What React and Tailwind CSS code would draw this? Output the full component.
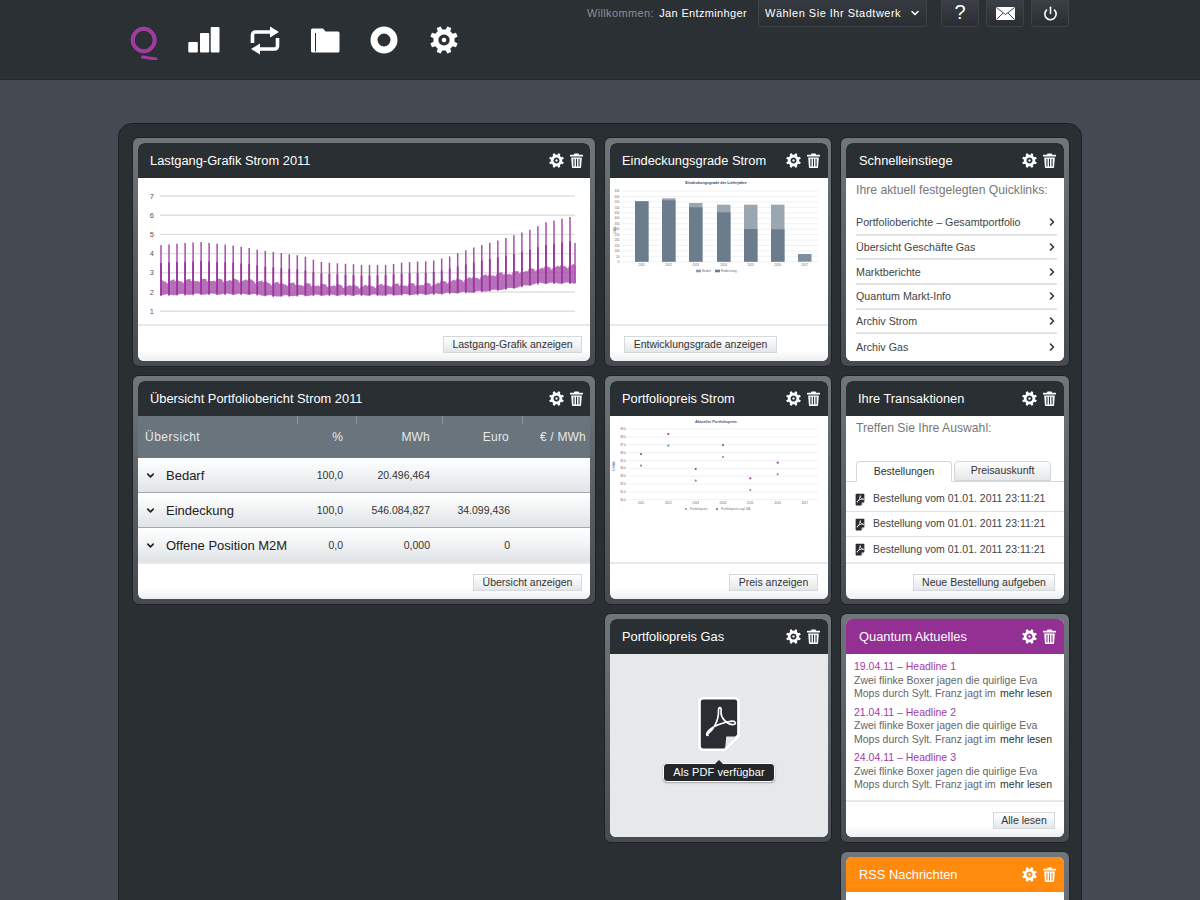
import { ChevronDown, ChevronRight, Power } from 'lucide-react';

const FONT = "font-['Liberation_Sans',Arial,sans-serif]";

// cog outline with a hole, used both in the nav and the card headers
const cogPath = (teeth, outer, inner) => {
    const pts = [];
    const step = (Math.PI * 2) / teeth;
    for (let i = 0; i < teeth; i++) {
        const a = i * step - Math.PI / 8;
        const w = step * 0.2;
        const p = (ang, r) => `${(16 + Math.cos(ang) * r).toFixed(2)} ${(16 + Math.sin(ang) * r).toFixed(2)}`;
        pts.push(`${i === 0 ? 'M' : 'L'}${p(a - w * 1.5, inner)}`, `L${p(a - w * 0.95, outer)}`, `L${p(a + w * 0.95, outer)}`, `L${p(a + w * 1.5, inner)}`);
    }
    return pts.join(' ') + ' Z';
};

const Cog = ({ className }) => (
    <svg viewBox="0 0 32 32" className={className}>
        <path
            fillRule="evenodd"
            fill="#fff"
            d={`${cogPath(8, 16, 12.2)} M16 9.6 a6.4 6.4 0 1 0 0.01 0 Z M16 13.4 a2.6 2.6 0 1 1 -0.01 0 Z`}
        />
    </svg>
);

const Trash = () => (
    <svg viewBox="0 0 13 15" className="w-[13px] h-[15px]">
        <path fill="#fff" d="M4.5 0.5h4l.6 1.3H12.6a.4.4 0 0 1 .4.4v1.3H0V2.2a.4.4 0 0 1 .4-.4H3.9z" />
        <path
            fill="#fff"
            fillRule="evenodd"
            d="M1.2 4.4h10.6l-.7 9.6a1 1 0 0 1-1 1H2.9a1 1 0 0 1-1-1z M3.4 5.8v7.6h1.1V5.8z M5.95 5.8v7.6h1.1V5.8z M8.5 5.8v7.6h1.1V5.8z"
        />
    </svg>
);

const QLogo = () => (
    <svg viewBox="0 0 28 34" className="w-7 h-[34px]">
        <ellipse cx="13.7" cy="14" rx="11" ry="11.2" fill="none" stroke="#a03ca0" strokeWidth="4" />
        <path d="M12.5 31 L26 33" stroke="#a03ca0" strokeWidth="3" strokeLinecap="round" />
    </svg>
);

const BarsIcon = () => (
    <svg viewBox="0 0 32 26" className="w-8 h-[26px] mt-px" fill="#fff">
        <rect x="0.3" y="15" width="9.5" height="10.5" rx="1" />
        <rect x="12" y="6" width="9.2" height="19.5" rx="1" />
        <rect x="22.7" y="0" width="8.8" height="25.5" rx="1" />
    </svg>
);

const RepeatIcon = () => (
    <svg viewBox="0 0 30 29" className="w-[30px] h-[29px]" fill="#fff">
        <path d="M2.5 17 V9 a3 3 0 0 1 3 -3 H21" fill="none" stroke="#fff" strokeWidth="3.6" />
        <path d="M20 0.5 L29 6 L20 11.5 Z" />
        <path d="M27.5 12 V20 a3 3 0 0 1 -3 3 H9" fill="none" stroke="#fff" strokeWidth="3.6" />
        <path d="M10 17.5 L1 23 L10 28.5 Z" />
    </svg>
);

const FolderIcon = () => (
    <svg viewBox="0 0 30 25" className="w-[30px] h-[25px] mt-0.5">
        <path fill="#fff" d="M1 2 a1.5 1.5 0 0 1 1.5-1.5 H13 l2.5 3 H28 a1.5 1.5 0 0 1 1.5 1.5 V23 a1.5 1.5 0 0 1 -1.5 1.5 H2.5 A1.5 1.5 0 0 1 1 23 Z" />
        <path d="M5.5 5 V23.5" stroke="#2b3035" strokeWidth="1" />
    </svg>
);

const RingIcon = () => (
    <svg viewBox="0 0 28 28" className="w-7 h-7">
        <circle cx="14" cy="14" r="10" fill="none" stroke="#fff" strokeWidth="7" />
    </svg>
);

const MailIcon = () => (
    <svg viewBox="0 0 19 13" className="w-[19px] h-[13px]">
        <rect width="19" height="13" rx="0.5" fill="#fff" />
        <path d="M0.5 0.5 L9.5 7.5 L18.5 0.5 M0.5 12.5 L7 6 M18.5 12.5 L12 6" fill="none" stroke="#2b3035" strokeWidth="0.9" />
    </svg>
);

const PdfDoc = ({ className, glyph = 1.6 }) => (
    <svg viewBox="0 0 40 52" className={className}>
        <path d="M4 0 H36 a4 4 0 0 1 4 4 V38 L26 52 H4 a4 4 0 0 1 -4 -4 V4 a4 4 0 0 1 4 -4 Z" fill="#fff" />
        <path d="M5 2.5 H35 a2.5 2.5 0 0 1 2.5 2.5 V36 L25 49.5 H5 a2.5 2.5 0 0 1 -2.5 -2.5 V5 a2.5 2.5 0 0 1 2.5 -2.5 Z" fill="#2a2e32" />
        <path d="M27 38 H37 L26 49 Z" fill="#e8e8e8" />
        <path
            d="M8 36 C14 33 20 23 19.5 13 C19.4 9 22.5 9.5 22 13 C21 21 29 27 34 26.5 C37 26 36 23 32.5 23.3 C25 24 14 28 9.5 33 C7 36 8 38 10 36.5"
            fill="none"
            stroke="#fff"
            strokeWidth={glyph}
            strokeLinejoin="round"
        />
    </svg>
);

const LightButton = ({ children, className = '' }) => (
    <button className={`h-[17px] border border-[#d5d9dc] bg-gradient-to-b from-white to-[#e4e7ea] text-[10.5px] leading-none text-[#333] ${className}`}>
        {children}
    </button>
);

const Card = ({ title, head = 'bg-[#2a2f33]', footer, children, body = 'bg-white', titlePad = 'pl-3', iconPad = 'pr-2', className = '' }) => (
    <div className={`rounded-[7px] border border-[#1f2327] bg-gradient-to-b from-[#6f777c] to-[#454b50] px-[5px] pt-[5px] pb-[5px] ${className}`}>
        <div className="flex flex-col h-full rounded-[6px] overflow-hidden bg-white">
            <div className={`flex items-center h-[35px] shrink-0 ${iconPad} ${titlePad} ${head}`}>
                <span className="flex-1 text-[12.85px] text-white">{title}</span>
                <Cog className="w-[15px] h-[15px] mr-[6px]" />
                <Trash />
            </div>
            <div className={`flex-1 min-h-0 ${body}`}>{children}</div>
            {footer && (
                <div className="flex h-[37px] shrink-0 items-start border-t-2 border-[#e6e8ea] pt-[10px] bg-gradient-to-b from-white from-70% to-[#eceef0]">
                    {footer}
                </div>
            )}
        </div>
    </div>
);

// piecewise lookup for the load curve
const lerp = (table, x) => {
    for (let i = 1; i < table.length; i++) {
        if (x <= table[i][0]) {
            const [x0, y0] = table[i - 1];
            const [x1, y1] = table[i];
            return y0 + ((y1 - y0) * (x - x0)) / (x1 - x0);
        }
    }
    return table[table.length - 1][1];
};

const bandTop = [[161, 281], [200, 280], [250, 280], [273, 283], [320, 285], [363, 286], [385, 285], [432, 284], [448, 281], [472, 278], [496, 274], [512, 273], [540, 268], [575, 265]];
const bandBot = [[161, 295], [200, 294], [250, 294], [273, 296], [320, 295], [363, 295], [385, 295], [432, 294], [448, 293], [472, 292], [496, 290], [512, 288], [540, 283], [575, 283]];
const spikeTop = [[161, 245], [200, 242], [230, 245], [273, 252], [303, 256], [320, 262], [363, 265], [385, 265], [408, 262], [432, 261], [448, 257], [472, 248], [496, 241], [512, 236], [535, 228], [543, 223], [570, 217]];

const LoadChart = () => {
    let band = '';
    for (let x = 161; x <= 575; x += 1) {
        const n = Math.sin(x * 12.9898) * 1.2;
        // weekends sit a little lower, so the top of the band steps every 8px
        const dip = (x - 161) % 8 > 5 ? 1.5 : 0;
        band += `M${x - 138} ${(lerp(bandTop, x) + n + dip - 178).toFixed(1)}V${(lerp(bandBot, x) - n * 0.5 - 178).toFixed(1)}`;
    }
    let spikes = '';
    let sub = '';
    for (let i = 0; i < 52; i++) {
        const x = 161 + i * 8.02;
        const top = lerp(spikeTop, x);
        const bot = lerp(bandBot, x);
        spikes += `M${(x - 138).toFixed(1)} ${(top - 178).toFixed(1)}V${(bot + 1 - 178).toFixed(1)}`;
        sub += `M${(x - 138).toFixed(1)} ${((top + lerp(bandTop, x)) / 2 - 178).toFixed(1)}V${(bot - 178).toFixed(1)}`;
    }
    spikes += 'M437 65V105';
    return (
        <svg viewBox="0 0 452 144" className="w-full h-[144px] block">
            {[7, 6, 5, 4, 3, 2, 1].map((v, i) => (
                <g key={v}>
                    <line x1="22" x2="437" y1={18 + i * 19.2} y2={18 + i * 19.2} stroke="#e0e0e0" strokeWidth="1.4" />
                    <text x="16" y={20.5 + i * 19.2} textAnchor="end" fontSize="7.5" fill="#555">{v}</text>
                </g>
            ))}
            <path d={band} stroke="#9f42a2" strokeWidth="1" fill="none" />
            <path d={spikes} stroke="#a94fae" strokeWidth="1.5" fill="none" />
            <path d={sub} stroke="#9c369f" strokeWidth="1.8" fill="none" />
        </svg>
    );
};

const coverage = [
    [25, 23.3, 23.3],
    [52, 20.3, 22.3],
    [79, 25, 29.3],
    [107, 26.7, 34.3],
    [134, 26.7, 51],
    [161, 26.7, 51.3],
    [188, 76, 76],
];

const CoverageChart = () => (
    <svg viewBox="0 0 218 144" className="w-full h-[144px] block">
        <text x="106" y="5.5" textAnchor="middle" fontSize="3.8" fontWeight="700" fill="#445">Eindeckungsgrade der Lieferjahre</text>
        {Array.from({ length: 14 }).map((_, i) => (
            <g key={i}>
                <line x1="12" x2="208" y1={13 + i * 5.45} y2={13 + i * 5.45} stroke="#eceef0" strokeWidth="0.8" />
                <text x="9.5" y={14.2 + i * 5.45} textAnchor="end" fontSize="3" fill="#667">{650 - i * 50}</text>
            </g>
        ))}
        {coverage.map(([x, light, dark], i) => (
            <g key={x}>
                <rect x={x} y={light} width="13.5" height={83.7 - light} fill={i === 6 ? '#808e9b' : '#9aa6b0'} />
                {i < 6 && <rect x={x} y={dark} width="13.5" height={83.7 - dark} fill="#6b7d8d" />}
                <text x={x + 6.7} y="88" textAnchor="middle" fontSize="3" fill="#667">{2011 + i}</text>
            </g>
        ))}
        <text x="6" y="52" fontSize="3" fill="#667" textAnchor="middle" transform="rotate(-90 6 52)">GWh</text>
        <rect x="86" y="91.7" width="5" height="2.6" fill="#8f9ba6" />
        <text x="92" y="94.2" fontSize="3" fill="#667">Bedarf</text>
        <rect x="105" y="91.7" width="5" height="2.6" fill="#6b7d8d" />
        <text x="111" y="94.2" fontSize="3" fill="#667">Eindeckung</text>
    </svg>
);

const greyDots = [[31, 49.7], [58.3, 29.7], [85.7, 64.7], [113, 41], [140.3, 74], [167.7, 58.3]];
const purpleDots = [[31, 38], [58.3, 18], [85.7, 53], [113, 29], [140.3, 62.3], [167.7, 46.7]];

const PriceChart = () => (
    <svg viewBox="0 0 218 144" className="w-full h-[144px] block">
        <text x="106" y="6.5" textAnchor="middle" fontSize="3.8" fontWeight="700" fill="#445a70">Aktueller Portfoliopreis</text>
        {Array.from({ length: 10 }).map((_, i) => (
            <g key={i}>
                <line x1="18" x2="208" y1={13 + i * 7.85} y2={13 + i * 7.85} stroke="#eceef0" strokeWidth="0.8" />
                <text x="16" y={14.2 + i * 7.85} textAnchor="end" fontSize="3" fill="#667">{`${99 - i},0`}</text>
            </g>
        ))}
        {[2011, 2012, 2013, 2014, 2015, 2016, 2017].map((y, i) => (
            <text key={y} x={31 + i * 27.3} y="88" textAnchor="middle" fontSize="3" fill="#667">{y}</text>
        ))}
        {greyDots.map(([x, y]) => <circle key={x} cx={x} cy={y} r="1.1" fill="#8a9098" />)}
        {purpleDots.map(([x, y]) => <circle key={x} cx={x} cy={y} r="1.1" fill="#a83aa8" />)}
        <text x="4.5" y="50" fontSize="3" fill="#4a6a9a" textAnchor="middle" transform="rotate(-90 4.5 50)">€ /MWh</text>
        <circle cx="76" cy="93" r="1" fill="#8a9098" />
        <text x="80" y="94" fontSize="3" fill="#778">Portfoliopreis</text>
        <circle cx="107" cy="93" r="1" fill="#a83aa8" />
        <text x="111" y="94" fontSize="3" fill="#778">Portfoliopreis zzgl. BA</text>
    </svg>
);

const tableRows = [
    ['Bedarf', '100,0', '20.496,464', ''],
    ['Eindeckung', '100,0', '546.084,827', '34.099,436'],
    ['Offene Position M2M', '0,0', '0,000', '0'],
];

const PortfolioTable = () => (
    <div>
        <div className="relative grid grid-cols-[159px_59px_86px_80px_68px] items-center h-[42px] bg-[#69747c] text-[12px] text-[#e6e9eb] tracking-[0.2px]">
            <span className="pl-[7px] tracking-[0.5px]">Übersicht</span>
            <span className="text-right pr-[13px]">%</span>
            <span className="text-right pr-3">MWh</span>
            <span className="text-right pr-[13px]">Euro</span>
            <span className="text-right pr-1">€ / MWh</span>
            <i className="absolute top-0 left-[159px] w-px h-2 bg-[#8b959c]" />
            <i className="absolute top-0 left-[218px] w-px h-2 bg-[#8b959c]" />
            <i className="absolute top-0 left-[304px] w-px h-2 bg-[#8b959c]" />
            <i className="absolute top-0 left-[384px] w-px h-2 bg-[#8b959c]" />
        </div>
        {tableRows.map(([label, pct, mwh, euro]) => (
            <div key={label} className="grid grid-cols-[159px_59px_86px_80px_68px] items-center h-[35px] border-t border-white border-b border-b-[#a0a8ad] bg-gradient-to-b from-white to-[#e0e4e7] text-[10.5px] text-[#333]">
                <span className="flex items-center pl-[7px] text-[13px] text-[#222] whitespace-nowrap">
                    <ChevronDown size={11} strokeWidth={3.5} className="mr-[10px] shrink-0" />
                    {label}
                </span>
                <span className="text-right pr-[13px]">{pct}</span>
                <span className="text-right pr-3">{mwh}</span>
                <span className="text-right pr-3">{euro}</span>
                <span />
            </div>
        ))}
    </div>
);

const quickLinks = [
    'Portfolioberichte – Gesamtportfolio',
    'Übersicht Geschäfte Gas',
    'Marktberichte',
    'Quantum Markt-Info',
    'Archiv Strom',
    'Archiv Gas',
];

const QuickLinks = () => (
    <div className="pl-[10px] pr-[7px] pt-[5px]">
        <p className="text-[12.2px] leading-[15px] text-[#777] whitespace-nowrap">Ihre aktuell festgelegten Quicklinks:</p>
        <ul className="mt-[13px]">
            {quickLinks.map((l, i) => (
                <li key={l} className={`flex items-center justify-between h-[24.7px] text-[10.7px] text-[#444] ${i < 5 ? 'border-b-2 border-[#e0e2e4]' : ''}`}>
                    {l}
                    <ChevronRight size={12} strokeWidth={3.2} className="text-[#333] -mr-[1px]" />
                </li>
            ))}
        </ul>
    </div>
);

const Transactions = () => (
    <div>
        <p className="pl-[10px] pt-[5px] text-[12.2px] leading-[15px] text-[#777]">Treffen Sie Ihre Auswahl:</p>
        <div className="flex mt-[25px] pl-[10px] gap-0.5 h-[21px] border-b border-[#d4d7da] text-[10.5px] text-[#333]">
            <span className="flex items-center justify-center w-[96px] h-[21px] rounded-t-[4px] border border-[#d4d7da] border-b-white bg-white">Bestellungen</span>
            <span className="flex items-center justify-center w-[97px] h-5 rounded-t-[4px] border border-[#d4d7da] bg-gradient-to-b from-white to-[#e4e7ea]">Preisauskunft</span>
        </div>
        <div className="pt-[5px]">
            {[0, 1, 2].map((i) => (
                <div key={i} className={`flex items-center h-[25px] pl-[9px] text-[10.5px] text-[#444] whitespace-nowrap ${i < 2 ? 'border-b border-[#dfe1e3]' : ''}`}>
                    <PdfDoc className="w-[10px] h-[13px] mr-2 shrink-0" glyph={3} />
                    Bestellung vom 01.01. 2011 23:11:21
                </div>
            ))}
        </div>
    </div>
);

const News = () => (
    <div className="px-2 pt-[6px] text-[10.5px] leading-[13.5px] text-[#666] whitespace-nowrap">
        {['19.04.11 – Headline 1', '21.04.11 – Headline 2', '24.04.11 – Headline 3'].map((h) => (
            <div key={h} className="mb-[5px]">
                <div className="text-[#a33ca3]">{h}</div>
                <div>Zwei flinke Boxer jagen die quirlige Eva</div>
                <div className="flex justify-between">
                    <span>Mops durch Sylt. Franz jagt im</span>
                    <span className="text-[#333] mr-1">mehr lesen</span>
                </div>
            </div>
        ))}
    </div>
);

const PdfPanel = () => (
    <div className="flex flex-col items-center h-full pt-[43px]">
        <PdfDoc className="w-[42px] h-[54px]" />
        <div className="relative mt-[12px] flex items-center justify-center w-[112px] h-[19px] rounded-[4px] border border-white bg-[#23272b] text-[11px] text-white tracking-[0.1px] shadow-[0_1px_2px_rgba(0,0,0,0.3)]">
            Als PDF verfügbar
            <i className="absolute -top-[4px] left-1/2 -translate-x-1/2 w-0 h-0 border-x-[4px] border-x-transparent border-b-[4px] border-b-[#23272b]" />
        </div>
    </div>
);

const TopButton = ({ children }) => (
    <div className="flex items-center justify-center w-[38px] h-7 -mt-px rounded-b-[3px] border border-[#3d4349] bg-gradient-to-b from-[#3a4046] to-[#2a2e33] text-white">
        {children}
    </div>
);

const App = () => {
    return (
        <div className={`h-screen overflow-hidden bg-[#454a52] bg-[radial-gradient(rgba(255,255,255,0.025)_1px,transparent_1px)] bg-[size:3px_3px] ${FONT}`}>
            {/* Header */}
            <header className="flex justify-between h-20 pl-[130px] pr-[131px] bg-[#2b3035] border-b border-[#25292d]">
                <nav className="flex items-start gap-[30px] pt-[26px]">
                    <QLogo />
                    <BarsIcon />
                    <RepeatIcon />
                    <FolderIcon />
                    <RingIcon />
                    <Cog className="w-7 h-7 ml-0.5" />
                </nav>
                <div className="flex items-start">
                    <div className="pt-[7px] text-[11px] leading-[13px] tracking-[0.35px] text-[#8b9094] whitespace-nowrap">
                        Willkommen: <span className="text-white ml-0.5">Jan Entzminhger</span>
                    </div>
                    <div className="flex items-center justify-between w-[169px] h-7 -mt-px ml-[11px] mr-[14px] pl-[6px] pr-[5px] rounded-b-[3px] border border-[#3d4349] bg-gradient-to-b from-[#363c42] to-[#2a2e33] text-[11px] text-white tracking-[0.5px] whitespace-nowrap">
                        Wählen Sie Ihr Stadtwerk
                        <ChevronDown size={12} strokeWidth={3} />
                    </div>
                    <div className="flex items-start gap-[7px]">
                        <TopButton><span className="text-[20px] leading-none -mt-0.5">?</span></TopButton>
                        <TopButton><MailIcon /></TopButton>
                        <TopButton><Power size={15} strokeWidth={2.5} /></TopButton>
                    </div>
                </div>
            </header>

            {/* Dashboard */}
            <main className="pt-[43px] pl-[118px]">
                <div className="w-[964px] rounded-[14px] border border-[#1c1f22] bg-[#2a2f33] pt-[13px] pl-[13px]">
                    <div className="grid grid-cols-[464px_228px_230px] auto-rows-[230px] gap-2">
                        <Card title="Lastgang-Grafik Strom 2011" iconPad="pr-[7px]" footer={<LightButton className="ml-auto mr-2 w-[139px]">Lastgang-Grafik anzeigen</LightButton>}>
                            <LoadChart />
                        </Card>
                        <Card title="Eindeckungsgrade Strom" className="pr-[3px]" footer={<LightButton className="ml-[14px] w-[153px]">Entwicklungsgrade anzeigen</LightButton>}>
                            <CoverageChart />
                        </Card>
                        <Card title="Schnelleinstiege" titlePad="pl-[13px]">
                            <QuickLinks />
                        </Card>

                        <Card title="Übersicht Portfoliobericht Strom 2011" iconPad="pr-[7px]" footer={<LightButton className="ml-auto mr-2 w-[109px]">Übersicht anzeigen</LightButton>}>
                            <PortfolioTable />
                        </Card>
                        <Card title="Portfoliopreis Strom" className="pr-[3px]" footer={<LightButton className="ml-auto mr-[10px] w-[89px]">Preis anzeigen</LightButton>}>
                            <PriceChart />
                        </Card>
                        <Card title="Ihre Transaktionen" footer={<LightButton className="ml-auto mr-[9px] w-[142px]">Neue Bestellung aufgeben</LightButton>}>
                            <Transactions />
                        </Card>

                        <Card title="Portfoliopreis Gas" body="bg-[#e6e8ea]" className="col-start-2 pr-[3px]">
                            <PdfPanel />
                        </Card>
                        <Card title="Quantum Aktuelles" head="bg-[#942f94]" titlePad="pl-[13px]" footer={<LightButton className="ml-auto mr-[9px] w-[62px]">Alle lesen</LightButton>}>
                            <News />
                        </Card>

                        <Card title="RSS Nachrichten" head="bg-[#ff8a0e]" titlePad="pl-[13px]" className="col-start-3" />
                    </div>
                </div>
            </main>
        </div>
    );
};

export default App;
